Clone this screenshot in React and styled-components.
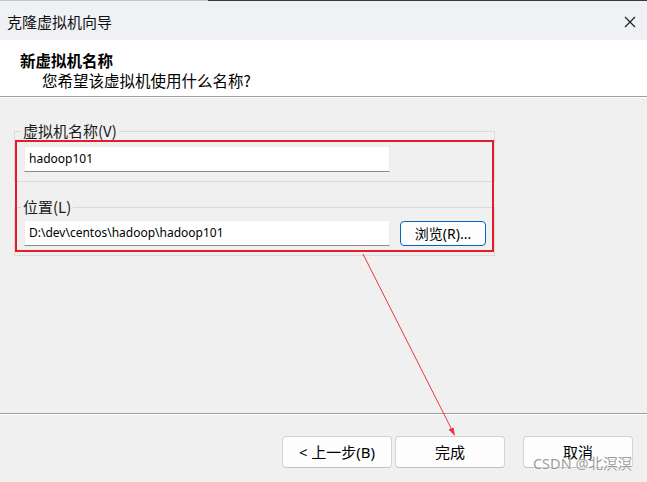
import styled, { createGlobalStyle } from "styled-components";

const GlobalStyle = createGlobalStyle`
  html, body {
    margin: 0;
    padding: 0;
    background: #f0f0f0;
  }
  body {
    font-family: "Noto Sans", "Noto Sans CJK SC", sans-serif;
    color: #000;
  }
`;

const Window = styled.div`
  position: relative;
  width: 647px;
  height: 482px;
  display: flex;
  flex-direction: column;
  background: #f0f0f0;
  overflow: hidden;
`;

const TopEdge = styled.div`
  display: flex;
  height: 1px;
  background: #c4c6ca;
`;

const TopEdgeDark = styled.div`
  margin-left: auto;
  width: 439px;
  background: #3a3a3a;
`;

const TitleBar = styled.div`
  height: 39px;
  display: flex;
  align-items: center;
  justify-content: space-between;
  padding: 2px 3px 0 7px;
  box-sizing: border-box;
  background: #eff1f5;
  font-family: "Noto Sans CJK SC", sans-serif;
  font-size: 15px;
  color: #111;
`;

const CloseButton = styled.div`
  width: 28px;
  height: 28px;
  display: flex;
  align-items: center;
  justify-content: center;
`;

const Header = styled.div`
  height: 57px;
  background: #fff;
  display: flex;
  flex-direction: column;
  padding: 10px 0 0 20px;
  box-sizing: border-box;
  border-bottom: 1px solid #a0a0a0;
  font-family: "Noto Sans CJK SC", sans-serif;
  font-size: 15.5px;
  line-height: 20px;
`;

const HeaderTitle = styled.div`
  font-weight: 700;
`;

const HeaderSub = styled.div`
  padding-left: 22px;
`;

const Body = styled.div`
  flex: 1;
  display: flex;
  flex-direction: column;
  padding: 23px 0 0 14px;
  border-top: 1px solid #fff;
`;

const Group = styled.fieldset`
  width: 481px;
  box-sizing: border-box;
  margin: 0 0 ${(p) => p.$after || 0}px;
  padding: ${(p) => p.$top}px 0 9px 9px;
  border: 1px solid #dadada;
  display: flex;
  align-items: center;
  gap: 10px;
`;

const Legend = styled.legend`
  padding: 0 2px;
  margin-left: -3px;
  font-family: "Noto Sans CJK SC", sans-serif;
  font-size: 15px;
  line-height: 20px;
  color: #1a1a1a;
`;

const Field = styled.div`
  width: 366px;
  height: 26px;
  box-sizing: border-box;
  background: #fff;
  border: 1px solid #ececec;
  border-bottom-color: #8a8a8a;
  display: flex;
  align-items: center;
  padding: 0 0 2px 4px;
  font-size: 12px;
  font-family: "Noto Sans", "Noto Sans CJK SC", sans-serif;
`;

const Button = styled.div`
  width: ${(p) => p.$w}px;
  height: ${(p) => p.$h}px;
  box-sizing: border-box;
  display: flex;
  align-items: center;
  justify-content: center;
  background: #fdfdfd;
  border: 1px solid ${(p) => (p.$focus ? "#0067c0" : "#d3d3d3")};
  border-bottom-color: ${(p) => (p.$focus ? "#0067c0" : "#c2c2c2")};
  border-radius: 4px;
  font-family: "Noto Sans", "Noto Sans CJK SC", sans-serif;
  font-size: ${(p) => p.$fs || 15}px;
  padding-bottom: 1px;
`;

const Footer = styled.div`
  height: 69px;
  border-top: 1px solid #a0a0a0;
  box-shadow: inset 0 1px 0 #fff;
  display: flex;
  align-items: flex-start;
  padding: 22px 14px 0 0;
  box-sizing: border-box;
`;

const ButtonRow = styled.div`
  margin-left: auto;
  display: flex;
  gap: 3px;
`;

const CancelWrap = styled.div`
  margin-left: 15px;
`;

const Highlight = styled.div`
  position: absolute;
  left: 15px;
  top: 140px;
  width: 479px;
  height: 112px;
  box-sizing: border-box;
  border: 2px solid #e81b2b;
  pointer-events: none;
`;

const Arrow = styled.svg`
  position: absolute;
  left: 0;
  top: 0;
  pointer-events: none;
`;

const Watermark = styled.div`
  position: absolute;
  right: 15px;
  bottom: 9px;
  font-family: "Noto Sans", "Noto Sans CJK SC", sans-serif;
  font-size: 14.5px;
  color: rgba(120, 120, 120, 0.75);
  text-shadow: 0 0 2px #fff, 0 0 2px #fff;
`;

export default function App() {
  return (
    <Window>
      <GlobalStyle />
      <TopEdge>
        <TopEdgeDark />
      </TopEdge>
      <TitleBar>
        <span>克隆虚拟机向导</span>
        <CloseButton>
          <svg width="12" height="12" viewBox="0 0 12 12">
            <path d="M1 1 L11 11 M11 1 L1 11" stroke="#1a1a1a" strokeWidth="1.1" />
          </svg>
        </CloseButton>
      </TitleBar>
      <Header>
        <HeaderTitle>新虚拟机名称</HeaderTitle>
        <HeaderSub>您希望该虚拟机使用什么名称?</HeaderSub>
      </Header>
      <Body>
        <Group $top={5} $after={15}>
          <Legend>虚拟机名称(V)</Legend>
          <Field>hadoop101</Field>
        </Group>
        <Group $top={3}>
          <Legend>位置(L)</Legend>
          <Field>D:\dev\centos\hadoop\hadoop101</Field>
          <Button $w={86} $h={25} $fs={14} $focus>
            浏览(R)...
          </Button>
        </Group>
      </Body>
      <Footer>
        <ButtonRow>
          <Button $w={110} $h={32}>
            &lt; 上一步(B)
          </Button>
          <Button $w={110} $h={32}>
            完成
          </Button>
          <CancelWrap>
            <Button $w={110} $h={32}>
              取消
            </Button>
          </CancelWrap>
        </ButtonRow>
      </Footer>
      <Highlight />
      <Arrow width="647" height="482" viewBox="0 0 647 482">
        <line x1="363" y1="254" x2="453" y2="432" stroke="#e8393c" strokeWidth="1" />
        <path d="M455 436 L448.5 429.6 L453.6 427.4 Z" fill="#e8393c" />
      </Arrow>
      <Watermark>CSDN @北溟溟</Watermark>
    </Window>
  );
}
